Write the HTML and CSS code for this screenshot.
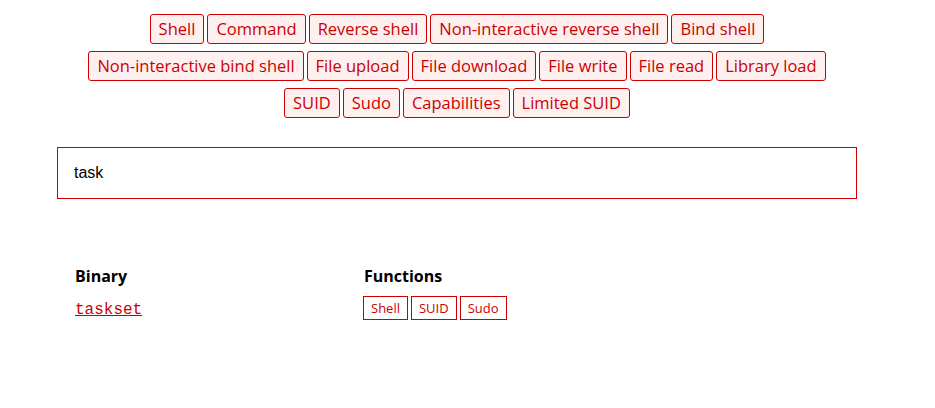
FILE: index.html
```html
<!DOCTYPE html>
<html>
<head>
<meta charset="utf-8">
<link rel="stylesheet" href="styles.css">
</head>
<body>
<div class="page">
  <div class="filters">
    <button class="filter">Shell</button>
    <button class="filter">Command</button>
    <button class="filter">Reverse shell</button>
    <button class="filter">Non-interactive reverse shell</button>
    <button class="filter">Bind shell</button>
    <button class="filter">Non-interactive bind shell</button>
    <button class="filter">File upload</button>
    <button class="filter">File download</button>
    <button class="filter">File write</button>
    <button class="filter">File read</button>
    <button class="filter">Library load</button>
    <button class="filter">SUID</button>
    <button class="filter">Sudo</button>
    <button class="filter">Capabilities</button>
    <button class="filter">Limited SUID</button>
  </div>
  <input class="search" type="text" value="task">
  <table class="results">
    <thead>
      <tr><th class="col-bin">Binary</th><th>Functions</th></tr>
    </thead>
    <tbody>
      <tr>
        <td class="col-bin"><a class="bin" href="#">taskset</a></td>
        <td>
          <div class="tags">
            <span class="tag">Shell</span>
            <span class="tag">SUID</span>
            <span class="tag">Sudo</span>
          </div>
        </td>
      </tr>
    </tbody>
  </table>
</div>
</body>
</html>
```

FILE: styles.css
```css
html, body {
  margin: 0;
  padding: 0;
  background: #fff;
}
body {
  font-family: "Open Sans", "Noto Sans", sans-serif;
  color: #000;
}
.page {
  width: 914px;
  padding-top: 14px;
  display: flex;
  flex-direction: column;
  align-items: center;
}
.filters {
  display: flex;
  flex-wrap: wrap;
  justify-content: center;
  gap: 7px 3px;
  width: 760px;
}
.filter {
  height: 30px;
  padding: 0 8px;
  border: 1px solid #cc0000;
  border-radius: 3px;
  background: #fff0f0;
  color: #cc0000;
  font-family: "Open Sans", "Noto Sans", sans-serif;
  font-size: 16.5px;
  line-height: 28px;
}
.search {
  box-sizing: border-box;
  width: 800px;
  height: 52px;
  margin-top: 29px;
  padding: 0 16px;
  border: 1px solid #cc0000;
  border-radius: 0;
  outline: none;
  font-family: "Liberation Sans", Arial, sans-serif;
  font-size: 16px;
  color: #000;
}
.results {
  width: 800px;
  margin-top: 65px;
  border-collapse: collapse;
}
.results th {
  text-align: left;
  font-size: 16px;
  font-weight: 700;
  padding: 0 0 8px 18px;
  height: 24px;
}
.results td {
  padding: 0 0 0 18px;
  vertical-align: middle;
}
.col-bin {
  width: 271px;
}
.bin {
  font-family: "Liberation Mono", "Courier New", monospace;
  font-size: 16px;
  color: #cc0000;
}
.tags {
  display: flex;
  gap: 3px;
  margin-left: -1px;
}
.tag {
  box-sizing: border-box;
  height: 24px;
  padding: 0 7px;
  border: 1px solid #cc0000;
  color: #cc0000;
  font-size: 13px;
  line-height: 22px;
}
```
